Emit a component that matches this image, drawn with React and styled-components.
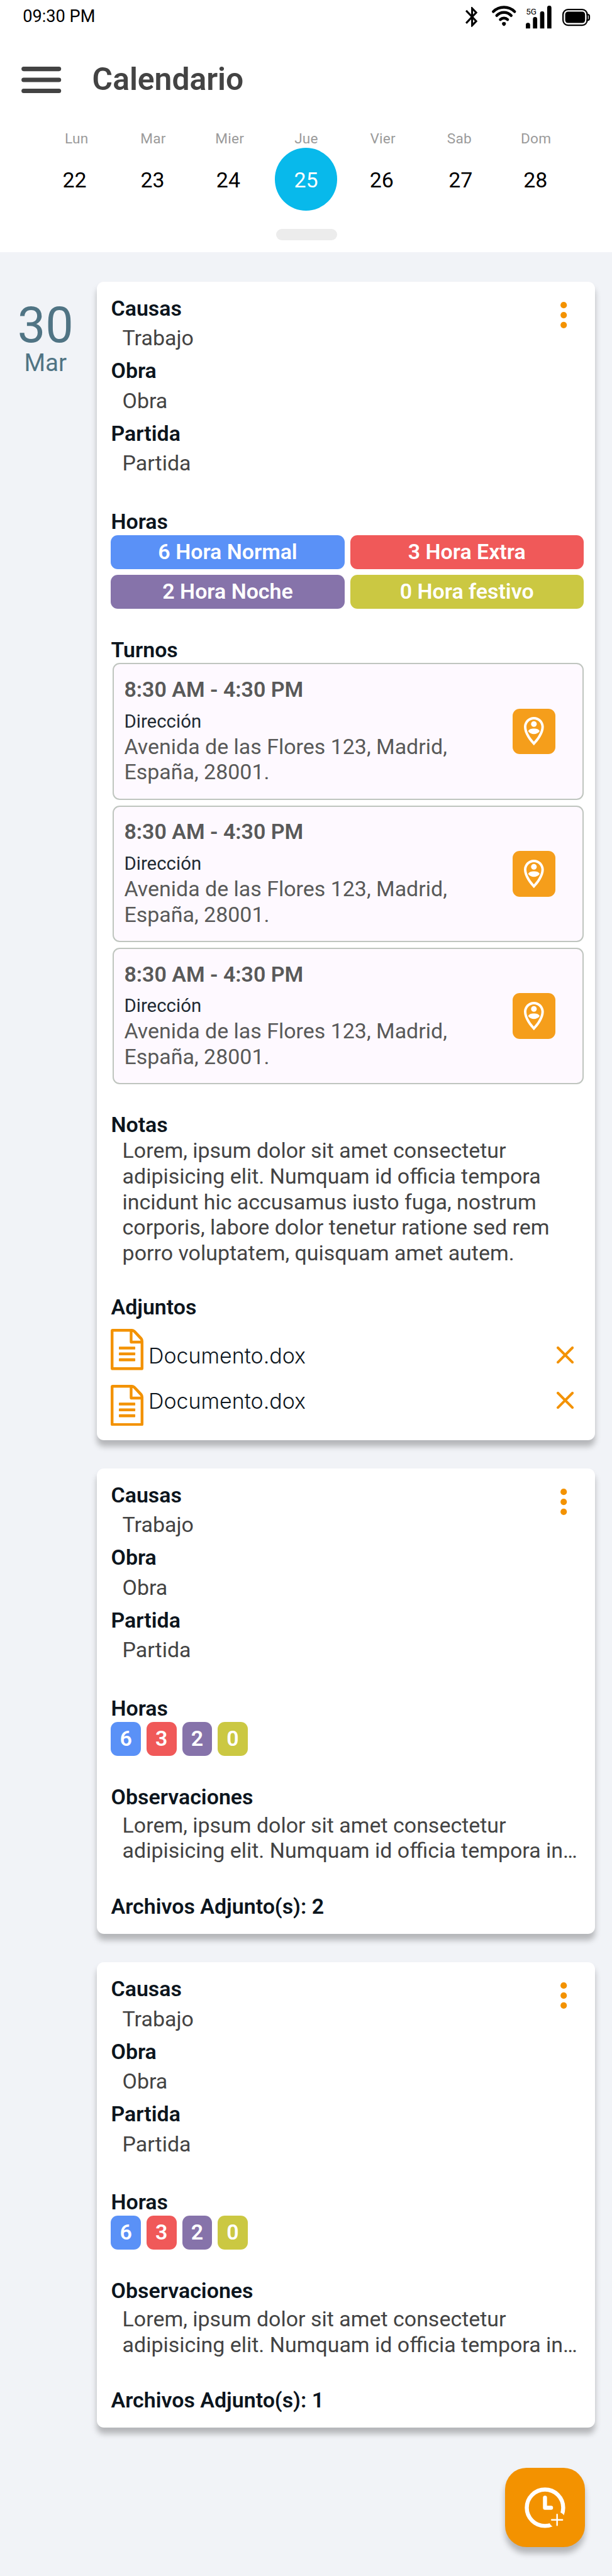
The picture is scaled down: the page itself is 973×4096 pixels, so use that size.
import React from "react";
import styled, { createGlobalStyle } from "styled-components";

// The layout is designed on a 430-unit-wide phone canvas.
const u = (n) => `${Math.round(n * 2.2628 * 1000) / 1000}px`;

const color = {
  bg: "#f1f3f7",
  orange: "#f39200",
  ink: "#0c151d",
  text: "#434343",
  date: "#507484",
};

const GlobalStyle = createGlobalStyle`
  *, *::before, *::after { box-sizing: border-box; }
  body { margin: 0; background: ${color.bg}; font-family: Roboto, "Liberation Sans", sans-serif; }
  button { border: 0; padding: 0; background: none; font: inherit; }
  svg { display: block; }
`;

const Screen = styled.div`
  width: 973px;
  height: 4096px;
  background: ${color.bg};
  overflow: hidden;
`;

const Header = styled.header`
  height: ${u(177)};
  background: #fff;
`;

const StatusBar = styled.div`
  display: flex;
  align-items: center;
  justify-content: space-between;
  height: ${u(24)};
  padding: 0 ${u(15.5)} 0 ${u(16)};
`;

const Clock = styled.span`
  font-size: ${u(12)};
  line-height: ${u(23.6)};
  color: #000;
`;

const StatusIcons = styled.div`
  display: flex;
  align-items: center;
`;

const StatusIcon = styled.svg`
  width: ${(p) => u(p.$w)};
  height: ${(p) => u(p.$h)};
  margin-left: ${(p) => u(p.$gap || 0)};
  overflow: visible;
`;

const AppBar = styled.div`
  display: flex;
  align-items: center;
  gap: ${u(21.6)};
  height: ${u(64)};
  padding-left: ${u(15.2)};
`;

const MenuIcon = styled.svg`
  width: ${u(28)};
  height: ${u(18.6)};
`;

const Title = styled.h1`
  margin: 0;
  font-size: ${u(22)};
  line-height: ${u(26)};
  font-weight: 600;
  color: ${color.text};
`;

const WeekNames = styled.div`
  display: grid;
  grid-template-columns: repeat(7, ${u(53.8)});
  height: ${u(16)};
  padding-left: ${u(26.9)};
  font-size: ${u(10)};
  line-height: ${u(19.2)};
  letter-spacing: ${u(0.1)};
  text-align: center;
  color: #9b9b9b;
`;

const WeekDays = styled.div`
  display: grid;
  grid-template-columns: ${[54.4, 55.2, 51.2, 58, 48.4, 62.4, 42.8].map(u).join(" ")};
  justify-items: center;
  padding-left: ${u(25.2)};
`;

const Day = styled.div`
  display: flex;
  align-items: center;
  justify-content: center;
  width: ${u(44)};
  height: ${u(44)};
  padding-top: ${u(1.4)};
  border-radius: 50%;
  font-size: ${u(15)};
  background: ${(p) => (p.$active ? "#08b9eb" : "transparent")};
  color: ${(p) => (p.$active ? "#fff" : "#000")};
`;

const Handle = styled.div`
  width: ${u(43)};
  height: ${u(8)};
  margin: ${u(13)} auto 0 ${u(194)};
  border-radius: ${u(4)};
  background: #ececec;
`;

const Timeline = styled.main`
  display: flex;
  padding-top: ${u(21)};
`;

const DateColumn = styled.div`
  width: ${u(68)};
  padding: ${u(13.8)} ${u(4.2)} 0 0;
  text-align: center;
  color: ${color.date};
`;

const DateDay = styled.div`
  font-size: ${u(35)};
  line-height: ${u(34)};
`;

const DateMonth = styled.div`
  font-size: ${u(17)};
  line-height: ${u(18.6)};
`;

const CardList = styled.div`
  display: flex;
  flex-direction: column;
  gap: ${u(20)};
  width: ${u(350)};
`;

const Card = styled.article`
  height: ${(p) => u(p.$h)};
  padding: ${u(10)} ${u(8)} ${u(10)} ${u(10)};
  border-radius: ${u(5)};
  background: #fff;
  box-shadow: 0 ${u(4)} ${u(4)} rgba(0, 0, 0, 0.25);
`;

const CardHeader = styled.div`
  display: flex;
  justify-content: space-between;
  align-items: flex-start;
`;

const FieldList = styled.div`
  display: flex;
  flex-direction: column;
  gap: ${u(5)};
`;

const Label = styled.div`
  font-size: ${u(15)};
  line-height: ${u(18)};
  font-weight: 600;
  color: ${color.ink};
  white-space: nowrap;
`;

const Value = styled.div`
  margin-top: ${u(3)};
  padding-left: ${u(8)};
  font-size: ${u(15)};
  line-height: ${u(18)};
  color: ${color.text};
`;

const MoreButton = styled.button`
  width: ${u(4.6)};
  height: ${u(18.6)};
  margin: ${u(4)} ${u(11.5)} 0 0;

  svg {
    width: 100%;
    height: 100%;
  }
`;

const Section = styled.section`
  margin-top: ${(p) => u(p.$gap ?? 20)};
`;

const HourGrid = styled.div`
  display: grid;
  grid-template-columns: 1fr 1fr;
  gap: ${u(4)};
`;

const HourRow = styled.div`
  display: flex;
  gap: ${u(4)};
`;

const Hour = styled.div`
  display: flex;
  align-items: center;
  justify-content: center;
  height: ${u(24)};
  border-radius: ${u(5)};
  background: ${(p) => p.$bg};
  font-size: ${u(15)};
  line-height: ${u(24)};
  font-weight: 600;
  color: #fff;
  width: ${(p) => (p.$compact ? u(21) : "auto")};
`;

const ShiftList = styled.div`
  display: flex;
  flex-direction: column;
  gap: ${u(4)};
  padding-left: ${u(1)};
`;

const Shift = styled.div`
  display: flex;
  align-items: center;
  justify-content: space-between;
  height: ${u(96)};
  padding: 0 ${u(19)} 0 ${u(7.4)};
  border: ${u(1)} solid #bfc5bf;
  border-radius: ${u(5)};
  background: #fef9ff;
  white-space: nowrap;
`;

const ShiftTime = styled.div`
  font-size: ${u(15)};
  line-height: ${u(18)};
  font-weight: 600;
  color: #595959;
`;

const ShiftCaption = styled.div`
  margin-top: ${u(4)};
  font-size: ${u(13)};
  line-height: ${u(18)};
  color: #222b33;
`;

const ShiftAddress = styled.div`
  font-size: ${u(15)};
  line-height: ${u(18)};
  color: #595959;
`;

const PinButton = styled.button`
  display: flex;
  align-items: center;
  justify-content: center;
  width: ${u(30)};
  height: ${u(32)};
  border-radius: ${u(5)};
  background: #f59e1b;

  svg {
    width: ${u(14)};
    height: ${u(20)};
  }
`;

const Paragraph = styled.p`
  margin: ${(p) => u(p.$top || 0)} 0 0;
  padding-left: ${u(8)};
  font-size: ${u(15)};
  line-height: ${u(18)};
  color: ${color.text};
  white-space: pre;
`;

const Attachments = styled.div`
  display: flex;
  padding-top: ${u(6)};
`;

const FileIcons = styled.div`
  display: flex;
  flex-direction: column;
  gap: ${u(10)};

  svg {
    width: ${u(23)};
    height: ${u(29)};
  }
`;

const FileNames = styled.div`
  flex: 1;
  padding: ${u(10)} 0 0 ${u(3.3)};
`;

const FileName = styled.div`
  height: ${u(32)};
  font-family: Inter, Roboto, sans-serif;
  font-size: ${u(15)};
  line-height: ${u(18)};
  font-weight: 300;
  color: ${color.ink};
`;

const RemoveButtons = styled.div`
  display: flex;
  flex-direction: column;
  gap: ${u(20)};
  padding: ${u(12)} ${u(7)} 0 0;

  svg {
    width: ${u(12)};
    height: ${u(12)};
  }
`;

const Fab = styled.button`
  display: flex;
  align-items: center;
  justify-content: center;
  width: ${u(56)};
  height: ${u(56)};
  margin: ${u(28)} ${u(19)} 0 auto;
  border-radius: ${u(15)};
  background: ${color.orange};
  box-shadow: 0 ${u(4)} ${u(4)} rgba(0, 0, 0, 0.25);

  svg {
    width: ${u(34)};
    height: ${u(34)};
  }
`;

const BluetoothIcon = () => (
  <StatusIcon $w={8.5} $h={14} viewBox="5 2 12.71 20" preserveAspectRatio="none">
    <path d="M17.71 7.71L12 2h-1v7.59L6.41 5 5 6.41 10.59 12 5 17.59 6.41 19 11 14.41V22h1l5.71-5.71-4.3-4.29 4.3-4.29zM13 5.83l1.88 1.88L13 9.59V5.83zm1.88 10.46L13 18.17v-3.76l1.88 1.88z" />
  </StatusIcon>
);

const WifiIcon = () => (
  <StatusIcon $w={17} $h={16} $gap={9.9} viewBox="0 0 17 16">
    <g fill="none" stroke="#000" strokeWidth="2" strokeLinecap="round">
      <path d="M1 4.2A10.6 10.6 0 0 1 16 4.2" />
      <path d="M3.4 6.95A7 7 0 0 1 13.6 6.95" />
      <path d="M5.95 9.75A3.6 3.6 0 0 1 11.05 9.75" />
    </g>
    <path d="M7.1 12.7a1.4 1.2 0 0 1 2.8 0q0 .9-1 1.4q-.4.2-.8 0q-1-.5-1-1.4z" />
  </StatusIcon>
);

const SignalIcon = () => (
  <StatusIcon $w={18} $h={16} $gap={7} viewBox="0 0 18 16">
    {[12, 8, 4, 0].map((top, i) => (
      <path key={top} d={`M${i * 5} 16V${top + 1.5}a1.5 1.5 0 0 1 3 0V16z`} />
    ))}
    <text x="0.1" y="6" fontSize="6" fontFamily="Roboto">
      5G
    </text>
  </StatusIcon>
);

const BatteryIcon = () => (
  <StatusIcon $w={19.5} $h={12} $gap={7.5} viewBox="0 0 19.5 12">
    <rect x="0.5" y="0.5" width="17" height="11" rx="3.5" fill="none" stroke="#000" />
    <rect x="2" y="2" width="14" height="8" rx="2" />
    <path d="M17 4h.8q1.2 0 1.2 1.1v1.8q0 1.1-1.2 1.1H17" fill="none" stroke="#000" />
  </StatusIcon>
);

const DotsIcon = () => (
  <svg viewBox="0 0 4.6 18.6" fill={color.orange}>
    <circle cx="2.3" cy="2.3" r="2.25" />
    <circle cx="2.3" cy="9.3" r="2.25" />
    <circle cx="2.3" cy="16.3" r="2.25" />
  </svg>
);

const PinIcon = () => (
  <svg viewBox="0 0 14 20" fill="#fff">
    <path
      fillRule="evenodd"
      d="M7 0C3.1 0 0 3.1 0 7c0 4.8 4 9.9 7 13c3-3.1 7-8.2 7-13c0-3.9-3.1-7-7-7zM7 1.75c2.9 0 5.25 2.3 5.25 5.25c0 3.5-2.9 7.9-5.25 10.3C4.65 14.9 1.75 10.5 1.75 7C1.75 4.05 4.1 1.75 7 1.75z"
    />
    <circle cx="7" cy="4.95" r="2" />
    <path d="M3 10C3.2 8.8 4.9 8.15 7 8.15S10.8 8.8 11 10C10.1 11.3 8.6 12 7 12S3.9 11.3 3 10z" />
  </svg>
);

const FileIcon = () => (
  <svg viewBox="0 0 23 29" fill={color.orange}>
    <path
      fillRule="evenodd"
      d="M1.4 0H15Q16.4 0 17.5 1.2L22 6Q23 7.1 23 8.6V27.6Q23 29 21.6 29H1.4Q0 29 0 27.6V1.4Q0 0 1.4 0zM1.95 2V27H21.05V10.3H14.8Q13.4 10.3 13.4 8.9V2zM15.3 2.25V8.3H21Q21 7.9 20.7 7.6L16.1 2.6Q15.8 2.25 15.3 2.25z"
    />
    <rect x="5.75" y="12.45" width="11.5" height="2.05" rx="0.4" />
    <rect x="5.75" y="16.55" width="11.5" height="2.05" rx="0.4" />
    <rect x="5.75" y="20.7" width="11.5" height="2.05" rx="0.4" />
  </svg>
);

const CloseIcon = () => (
  <svg viewBox="0 0 12 12">
    <path d="M.9.9L11.1 11.1M11.1.9L.9 11.1" stroke={color.orange} strokeWidth="1.8" strokeLinecap="round" />
  </svg>
);

const AddTimeIcon = () => (
  <svg viewBox="0 0 24 24" fill="none" stroke="#fff">
    <mask id="badge-gap" maskUnits="userSpaceOnUse" x="0" y="0" width="24" height="24">
      <rect width="24" height="24" fill="#fff" stroke="none" />
      <circle cx="18" cy="18" r="4.05" fill="#000" stroke="none" />
    </mask>
    <circle cx="12" cy="12" r="9.03" strokeWidth="2" mask="url(#badge-gap)" />
    <path d="M12 7v5h3" strokeWidth="2" strokeLinecap="round" strokeLinejoin="round" />
    <path d="M18 15.35v5.3M15.35 18h5.3" strokeWidth="0.75" strokeLinecap="round" />
  </svg>
);

const WEEK = [
  ["Lun", 22],
  ["Mar", 23],
  ["Mier", 24],
  ["Jue", 25],
  ["Vier", 26],
  ["Sab", 27],
  ["Dom", 28],
];

const HOURS = [
  { count: 6, name: "Hora Normal", bg: "#5a91f7" },
  { count: 3, name: "Hora Extra", bg: "#f05959" },
  { count: 2, name: "Hora Noche", bg: "#8673aa" },
  { count: 0, name: "Hora festivo", bg: "#cbc842" },
];

const NOTE = [
  "Lorem, ipsum dolor sit amet consectetur",
  "adipisicing elit. Numquam id officia tempora",
  "incidunt hic accusamus iusto fuga, nostrum",
  "corporis, labore dolor tenetur ratione sed rem",
  "porro voluptatem, quisquam amet autem.",
].join("\n");

const NOTE_PREVIEW = "Lorem, ipsum dolor sit amet consectetur\nadipisicing elit. Numquam id officia tempora in…";

const CardFields = () => (
  <CardHeader>
    <FieldList>
      {[
        ["Causas", "Trabajo"],
        ["Obra", "Obra"],
        ["Partida", "Partida"],
      ].map(([label, value]) => (
        <div key={label}>
          <Label>{label}</Label>
          <Value>{value}</Value>
        </div>
      ))}
    </FieldList>
    <MoreButton aria-label="Opciones">
      <DotsIcon />
    </MoreButton>
  </CardHeader>
);

const DetailCard = () => (
  <Card $h={814}>
    <CardFields />
    <Section $gap={23}>
      <Label>Horas</Label>
      <HourGrid>
        {HOURS.map((h) => (
          <Hour key={h.name} $bg={h.bg}>
            {h.count} {h.name}
          </Hour>
        ))}
      </HourGrid>
    </Section>
    <Section>
      <Label>Turnos</Label>
      <ShiftList>
        {[1, 2, 3].map((id) => (
          <Shift key={id}>
            <div>
              <ShiftTime>8:30 AM - 4:30 PM</ShiftTime>
              <ShiftCaption>Dirección</ShiftCaption>
              <ShiftAddress>
                Avenida de las Flores 123, Madrid,
                <br />
                España, 28001.
              </ShiftAddress>
            </div>
            <PinButton aria-label="Ubicación">
              <PinIcon />
            </PinButton>
          </Shift>
        ))}
      </ShiftList>
    </Section>
    <Section>
      <Label>Notas</Label>
      <Paragraph>{NOTE}</Paragraph>
    </Section>
    <Section>
      <Label>Adjuntos</Label>
      <Attachments>
        <FileIcons>
          <FileIcon />
          <FileIcon />
        </FileIcons>
        <FileNames>
          <FileName>Documento.dox</FileName>
          <FileName>Documento.dox</FileName>
        </FileNames>
        <RemoveButtons>
          <CloseIcon />
          <CloseIcon />
        </RemoveButtons>
      </Attachments>
    </Section>
  </Card>
);

const SummaryCard = ({ files }) => (
  <Card $h={327}>
    <CardFields />
    <Section $gap={23}>
      <Label>Horas</Label>
      <HourRow>
        {HOURS.map((h) => (
          <Hour key={h.name} $bg={h.bg} $compact>
            {h.count}
          </Hour>
        ))}
      </HourRow>
    </Section>
    <Section>
      <Label>Observaciones</Label>
      <Paragraph $top={2}>{NOTE_PREVIEW}</Paragraph>
    </Section>
    <Section $gap={21}>
      <Label>Archivos Adjunto(s): {files}</Label>
    </Section>
  </Card>
);

export default function App() {
  return (
    <>
      <GlobalStyle />
      <Screen>
        <Header>
          <StatusBar>
            <Clock>09:30 PM</Clock>
            <StatusIcons>
              <BluetoothIcon />
              <WifiIcon />
              <SignalIcon />
              <BatteryIcon />
            </StatusIcons>
          </StatusBar>
          <AppBar>
            <MenuIcon viewBox="0 0 28 18.6">
              <path
                d="M1.6 1.6H26.4M1.6 9.3H26.4M1.6 17H26.4"
                stroke={color.text}
                strokeWidth="3.1"
                strokeLinecap="round"
              />
            </MenuIcon>
            <Title>Calendario</Title>
          </AppBar>
          <WeekNames>
            {WEEK.map(([name]) => (
              <span key={name}>{name}</span>
            ))}
          </WeekNames>
          <WeekDays>
            {WEEK.map(([name, day]) => (
              <Day key={name} $active={day === 25}>
                {day}
              </Day>
            ))}
          </WeekDays>
          <Handle />
        </Header>
        <Timeline>
          <DateColumn>
            <DateDay>30</DateDay>
            <DateMonth>Mar</DateMonth>
          </DateColumn>
          <CardList>
            <DetailCard />
            <SummaryCard files={2} />
            <SummaryCard files={1} />
          </CardList>
        </Timeline>
        <Fab aria-label="Añadir horas">
          <AddTimeIcon />
        </Fab>
      </Screen>
    </>
  );
}
